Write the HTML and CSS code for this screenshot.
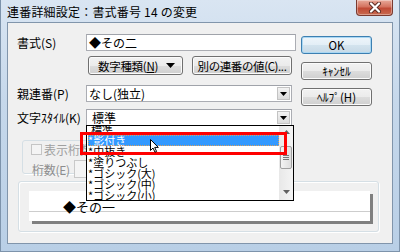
FILE: index.html
```html
<!DOCTYPE html>
<html lang="ja">
<head>
  <meta charset="UTF-8" />
  <title>連番詳細設定</title>
  <link rel="stylesheet" href="styles.css">
</head>
<body>
  <div class="window">
    <div class="titlebar">
      <span class="title">連番詳細設定：書式番号 14 の変更</span>
      <div class="close">
        <svg width="14" height="11" viewBox="0 0 14 11"><path d="M3 1.5 L11 9.5 M11 1.5 L3 9.5" stroke="#5a2a22" stroke-width="4" stroke-linecap="round"/><path d="M3 1.5 L11 9.5 M11 1.5 L3 9.5" stroke="#ffffff" stroke-width="2.2" stroke-linecap="round"/></svg>
      </div>
    </div>

    <div class="client">
      <div class="top">
        <div class="form">
          <div class="row r1">
            <span class="label">書式(S)</span>
            <div class="field">◆その二</div>
          </div>
          <div class="row r2">
            <div class="btn btn-num"><span>数字種類(<u>N</u>)</span><svg width="9" height="5" viewBox="0 0 9 5"><path d="M0 0 H9 L4.5 5 Z" fill="#000"/></svg></div>
            <div class="btn btn-other">別の連番の値(C)...</div>
          </div>
          <div class="row r3">
            <span class="label">親連番(P)</span>
            <div class="combo">なし(独立)<span class="drop"><svg width="7" height="4" viewBox="0 0 7 4"><path d="M0 0 H7 L3.5 4 Z" fill="#000"/></svg></span></div>
          </div>
          <div class="row r4">
            <span class="label">文字ｽﾀｲﾙ(K)</span>
            <div class="combo combo-style">標準<span class="drop"><svg width="7" height="4" viewBox="0 0 7 4"><path d="M0 0 H7 L3.5 4 Z" fill="#000"/></svg></span></div>
          </div>
        </div>
        <div class="side">
          <div class="btn btn-side btn-default">OK</div>
          <div class="btn btn-side">ｷｬﾝｾﾙ</div>
          <div class="btn btn-side">ﾍﾙﾌﾟ(H)</div>
        </div>
      </div>

      <div class="digits">
        <div class="legend"><span class="check"></span>表示桁数</div>
        <div class="digits-row">
          <span class="dim">桁数(E)</span>
          <div class="small-field"></div>
        </div>
      </div>

      <div class="preview">
        <div class="paper">
          <div class="paper-text">◆その一</div>
        </div>
      </div>

      <div class="list">
        <div class="items">
          <div class="item first">標準</div>
          <div class="item selected">*影付き</div>
          <div class="item">*中抜き</div>
          <div class="item">*塗りつぶし</div>
          <div class="item">*ゴシック(大)</div>
          <div class="item">*ゴシック(中)</div>
          <div class="item">*ゴシック(小)</div>
        </div>
        <div class="scroll">
          <svg class="sc-up" width="7" height="4" viewBox="0 0 7 4"><path d="M0 4 H7 L3.5 0 Z" fill="#606060"/></svg>
          <div class="thumb"><i></i><i></i><i></i></div>
          <svg class="sc-down" width="7" height="4" viewBox="0 0 7 4"><path d="M0 0 H7 L3.5 4 Z" fill="#606060"/></svg>
        </div>
      </div>

      <div class="marker"></div>

      <svg class="cursor" width="9" height="14" viewBox="0 0 9 14"><path d="M0.5 0.5 V11.5 L3 9 L5 13.2 L6.6 12.5 L4.7 8.4 L8.3 8.4 Z" fill="#fff" stroke="#000" stroke-width="1" stroke-linejoin="round"/></svg>
    </div>
  </div>
</body>
</html>
```

FILE: styles.css
```css
* {
  box-sizing: border-box;
}

body {
  margin: 0;
  background: #ffffff;
  font-family: "Noto Sans CJK JP", "Noto Sans", sans-serif;
  font-size: 12px;
  color: #000;
}

.window {
  width: 400px;
  height: 252px;
  background: linear-gradient(#d9e5f2, #c6d8eb 40%, #b9cfe6);
  border: 1px solid #7d93ab;
  border-top: none;
  display: flex;
  flex-direction: column;
}

.titlebar {
  height: 22px;
  display: flex;
  align-items: flex-start;
  padding-left: 6px;
}

.title {
  line-height: 24px;
  font-size: 12px;
  letter-spacing: 0.2px;
}

.close {
  margin-left: auto;
  margin-right: 6px;
  width: 37px;
  height: 16px;
  border: 1px solid #7a3a30;
  border-top: none;
  border-radius: 0 0 4px 4px;
  background: linear-gradient(#e8aa9a, #d4735f 45%, #c04a35 55%, #c86a50);
  box-shadow: inset 0 0 0 1px rgba(255, 255, 255, 0.35);
  display: flex;
  align-items: center;
  justify-content: center;
}

.client {
  position: relative;
  margin: 0 6px;
  height: 222px;
  background: #f0f0f0;
  border: 1px solid #8195ab;
}

.top {
  display: flex;
}

.form {
  padding: 11px 0 0 9px;
  width: 293px;
}

.row {
  display: flex;
  align-items: center;
}

.label {
  width: 69px;
  line-height: 14px;
  white-space: nowrap;
}

.field, .combo {
  height: 17px;
  background: #fff;
  border: 1px solid #abadb3;
  border-top-color: #a0a3aa;
  line-height: 15px;
  padding-left: 2px;
  white-space: nowrap;
}

.field {
  width: 210px;
}

.r2 {
  margin-top: 5px;
  padding-left: 71px;
  gap: 9px;
}

.r3 {
  margin-top: 10px;
}

.r4 {
  margin-top: 7px;
}

.combo {
  width: 206px;
  display: flex;
  align-items: center;
}

.combo-style {
  padding-left: 5px;
}

.drop {
  margin-left: auto;
  margin-right: 1px;
  width: 13px;
  height: 13px;
  background: linear-gradient(#f3f3f3, #dcdcdc);
  border: 1px solid #c3c3c3;
  display: flex;
  align-items: center;
  justify-content: center;
}

.btn {
  height: 19px;
  border: 1px solid #707070;
  border-radius: 3px;
  background: linear-gradient(#f2f2f2, #ebebeb 50%, #dddddd 51%, #cfcfcf);
  box-shadow: inset 0 0 0 1px #fbfbfb;
  display: flex;
  align-items: center;
  justify-content: center;
  line-height: 14px;
  white-space: nowrap;
  font-size: 11.5px;
}

.btn-num {
  width: 95px;
  gap: 8px;
  padding-left: 2px;
  letter-spacing: -0.3px;
}

.btn-num svg {
  flex-shrink: 0;
}

.btn-other {
  width: 100px;
  letter-spacing: -0.4px;
}

.side {
  padding-top: 13px;
  display: flex;
  flex-direction: column;
  gap: 8px;
}

.btn-side {
  width: 71px;
  height: 18px;
}

.btn-default {
  border-color: #3c7fb1;
  box-shadow: inset 0 0 0 1px #a9d7f3;
  background: linear-gradient(#eef5fa, #e3eef6 50%, #d3e3ee 51%, #c7d9e6);
}

.digits {
  margin: 14px 0 0 14px;
  width: 266px;
  height: 34px;
  border: 1px solid #d5dfe5;
  border-radius: 3px;
  box-shadow: 1px 1px 0 #fff;
}

.legend {
  display: inline-flex;
  align-items: center;
  gap: 2px;
  margin: -7px 0 0 6px;
  padding: 0 2px;
  background: #f0f0f0;
  color: #a0a0a0;
  line-height: 13px;
}

.check {
  width: 11px;
  height: 11px;
  border: 1px solid #c5c5c5;
  background: #f4f4f4;
}

.digits-row {
  display: flex;
  align-items: center;
  gap: 4px;
  padding: 0 0 0 9px;
  margin-top: 2px;
}

.dim {
  color: #8d8d8d;
  white-space: nowrap;
  letter-spacing: -0.3px;
}

.small-field {
  width: 60px;
  height: 18px;
  border: 1px solid #c9c9c9;
  background: #f4f4f4;
}

.preview {
  margin: 7px 0 0 10px;
  width: 361px;
  height: 51px;
  border: 1px solid #d5dfe5;
  border-radius: 3px;
  box-shadow: 1px 1px 0 #fff, inset 1px 1px 0 #fff;
  padding: 9px 0 0 10px;
}

.paper {
  width: 341px;
  height: 30px;
  background: #fff;
  box-shadow: 3px 3px 0 #7f7f7f;
}

.paper-text {
  height: 21px;
  border-bottom: 1px solid #cdcdcd;
  padding: 10px 0 0 34px;
  line-height: 12px;
  font-size: 13px;
}

.list {
  position: absolute;
  left: 78px;
  top: 102px;
  width: 208px;
  height: 76px;
  background: #fff;
  border: 1px solid #000;
  display: flex;
  overflow: hidden;
}

.items {
  flex: 1;
  padding-left: 1px;
}

.item {
  height: 11px;
  line-height: 11px;
  font-size: 11px;
  white-space: nowrap;
}

.item.first {
  margin-top: -2px;
  padding-left: 3px;
}

.item.selected {
  background: #3399ff;
  color: #fff;
  outline: 1px dotted #d9a060;
  outline-offset: -1px;
}

.scroll {
  width: 14px;
  background: linear-gradient(90deg, #e8e8e8, #f4f4f4);
  display: flex;
  flex-direction: column;
  align-items: center;
}

.sc-up {
  margin-top: 4px;
}

.thumb {
  margin-top: 12px;
  width: 12px;
  height: 23px;
  border: 1px solid #a0a0a0;
  border-radius: 2px;
  background: linear-gradient(90deg, #f4f4f4, #dedede);
  display: flex;
  flex-direction: column;
  align-items: center;
  justify-content: center;
  gap: 1px;
}

.thumb i {
  width: 6px;
  height: 1px;
  background: #777;
}

.sc-down {
  margin-top: auto;
  margin-bottom: 6px;
}

.marker {
  position: absolute;
  left: 72px;
  top: 109px;
  width: 207px;
  height: 23px;
  border: 3px solid #ff0000;
}

.cursor {
  position: absolute;
  left: 142px;
  top: 116px;
}
```
